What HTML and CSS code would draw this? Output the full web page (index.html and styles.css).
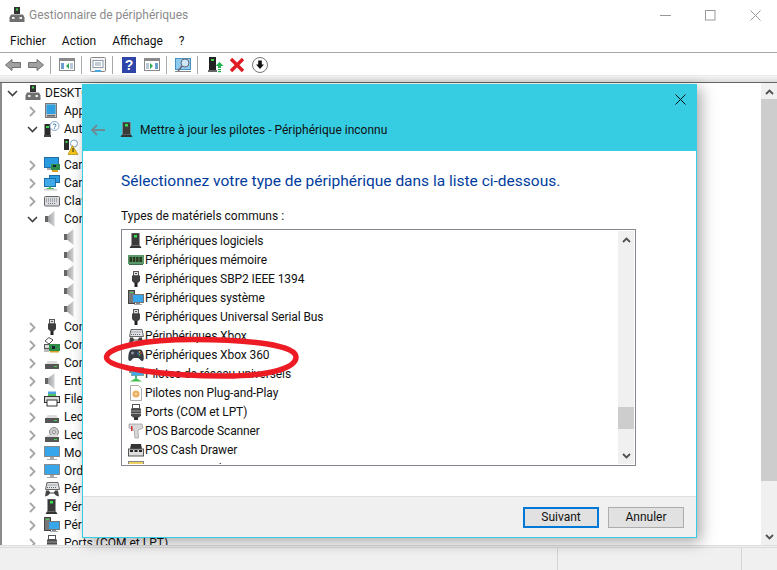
FILE: index.html
```html
<!DOCTYPE html>
<html lang="fr">
<head>
<meta charset="utf-8">
<title>Gestionnaire de périphériques</title>
<link rel="stylesheet" href="styles.css">
</head>
<body>
<svg class="defs" width="0" height="0">
  <defs>
    <linearGradient id="spk" x1="0" x2="1" y1="0" y2="0"><stop offset="0" stop-color="#777"/><stop offset=".45" stop-color="#aaa"/><stop offset="1" stop-color="#d0d3d5"/></linearGradient>
    <symbol id="tower" viewBox="0 0 16 16"><rect x="3.500" y="0" width="8" height="12.500" fill="#3a3a3a" stroke="#999" stroke-width=".6"/><rect x="6" y="2" width="3" height="2.500" fill="#35e04f"/><path d="M3 12.500h9l1.500 2.500H1.500z" fill="#333"/></symbol>
    <symbol id="pc" viewBox="0 0 16 16"><rect x="5" y="0" width="6" height="7" fill="#333"/><rect x="7" y="1.500" width="2" height="2" fill="#3fd64f"/><path d="M2 7.500h12l1.500 3v4.500H.5v-4.500z" fill="#707070"/><rect x="3" y="10" width="2.500" height="2" fill="#eee"/><rect x="10.500" y="10" width="2.500" height="2" fill="#eee"/></symbol>
    <symbol id="tablet" viewBox="0 0 16 16"><rect x="1.500" y="0.500" width="11" height="14" fill="#c4c4c4" stroke="#777"/><rect x="2.500" y="1.500" width="9" height="9.500" fill="#2f9fe0"/><rect x="3" y="12" width="8" height="1.500" fill="#666"/></symbol>
    <symbol id="unknown" viewBox="0 0 16 16"><rect x="0.500" y="3" width="6" height="11" fill="#2b2b2b"/><rect x="2" y="5" width="3" height="2" fill="#3fd64f"/><rect x="0" y="14" width="7" height="2" fill="#444"/><circle cx="10.500" cy="5" r="4.500" fill="#fff" stroke="#7fa6c9"/><path d="M9 3.900c.6-1.300 3-1.100 3 .3 0 1-1.400 1-1.400 2.300M10.600 7.300v.9" fill="none" stroke="#2f6ea8"/></symbol>
    <symbol id="warn" viewBox="0 0 16 16"><rect x="1" y="0" width="5" height="11" fill="#2b2b2b"/><rect x="2.500" y="2" width="2" height="2" fill="#3fd64f"/><circle cx="11" cy="4.500" r="3.500" fill="#fff" stroke="#7fa6c9"/><path d="M9.500 6.500L5 15.500h10z" fill="#f5c518" stroke="#a87b00" stroke-width=".6"/><rect x="9.500" y="9" width="1" height="4" fill="#222"/></symbol>
    <symbol id="netcard" viewBox="0 0 16 16"><rect x="0.500" y="0.500" width="14" height="10" fill="#2b9be0" stroke="#1c6ea8"/><rect x="7" y="7" width="9" height="6" fill="#2f8f4a"/><rect x="9" y="8" width="3" height="2" fill="#123"/><rect x="8" y="13" width="6" height="2" fill="#d8a020"/><rect x="3" y="11" width="4" height="2" fill="#aaa"/></symbol>
    <symbol id="monitors" viewBox="0 0 16 16"><rect x="5.500" y="0.500" width="10" height="7" fill="#2b9be0" stroke="#1c6ea8"/><rect x="0.500" y="3.500" width="11" height="8" fill="#3fa9ea" stroke="#1c6ea8"/><path d="M5 11.500h2v1.500h2.500l1 1.500H2L3 13h2z" fill="#3fc24f"/><rect x="0" y="14" width="13" height="1.500" fill="#ccc"/></symbol>
    <symbol id="keyboard" viewBox="0 0 16 16"><rect x="0.500" y="3.500" width="15" height="9.500" rx="1" fill="#d8dce0" stroke="#666"/><path d="M2 6h12M2 8h12M4 10.500h8" stroke="#777" stroke-dasharray="1 1"/></symbol>
    <symbol id="speaker" viewBox="0 0 16 16"><path d="M1 5H4.500l6-5v16l-6-5H1z" fill="url(#spk)"/><path d="M1 5H4v6H1z" fill="#666"/></symbol>
    <symbol id="usb" viewBox="0 0 16 16"><rect x="5.500" y="0.500" width="5" height="4.500" fill="#ddd" stroke="#555"/><rect x="7" y="2" width="2" height="1" fill="#555"/><path d="M4 4.500h8v5.500l-2 2H6l-2-2z" fill="#3f3f3f"/><rect x="6.500" y="12" width="3" height="4" fill="#222"/></symbol>
    <symbol id="storage" viewBox="0 0 16 16"><path d="M1 4l4-3.500L9 3 5 7z" fill="#fff" stroke="#555"/><rect x="0.500" y="7.500" width="6" height="4" fill="#ddd" stroke="#555"/><rect x="5" y="7" width="11" height="7" fill="#2f8f4a"/><rect x="8" y="9" width="3" height="3" fill="#123"/><rect x="6" y="14" width="9" height="1.500" fill="#d8a020"/><rect x="0" y="12" width="5" height="3" fill="#bbb"/></symbol>
    <symbol id="printer" viewBox="0 0 16 16"><rect x="4" y="0.500" width="8" height="5" fill="#4fa0e0"/><rect x="4" y="3" width="8" height="2" fill="#4fc060"/><rect x="0.500" y="5.500" width="15" height="6" fill="#ddd" stroke="#333"/><rect x="3" y="9" width="10" height="6" fill="#fff" stroke="#333"/></symbol>
    <symbol id="drive" viewBox="0 0 16 16"><path d="M2 9l1.500-3h9L14 9z" fill="#ddd"/><rect x="1" y="9" width="14" height="5" fill="#555"/><rect x="10" y="11" width="3" height="1" fill="#3fd64f"/></symbol>
    <symbol id="disc" viewBox="0 0 16 16"><circle cx="10" cy="5" r="4.500" fill="#ccc" stroke="#888"/><circle cx="10" cy="5" r="1.500" fill="#fff" stroke="#888"/><path d="M2 10l1-2h10l1 2z" fill="#ddd"/><rect x="1" y="10" width="14" height="5" fill="#555"/><rect x="10" y="12" width="3" height="1" fill="#3fd64f"/></symbol>
    <symbol id="monitor" viewBox="0 0 16 16"><rect x="0.500" y="1.500" width="15" height="10" fill="#38a6ea" stroke="#888"/><rect x="6" y="12" width="4" height="2" fill="#aaa"/><rect x="3" y="14" width="10" height="1" fill="#aaa"/></symbol>
    <symbol id="hid" viewBox="0 0 16 16"><path d="M3 1.500h11l1.500 7h-14z" fill="#e0e4e8" stroke="#666"/><path d="M3.500 4h9M3 6.500h10" stroke="#666" stroke-dasharray="1 1"/><path d="M1 15.500l1-6h3l1 2h4l1-2h3l1 6-3-1-2-2H6l-2 2z" fill="#444"/></symbol>
    <symbol id="system" viewBox="0 0 16 16"><rect x="0.500" y="0.500" width="6" height="13" fill="#777" stroke="#444"/><rect x="2" y="2" width="3" height="1" fill="#3fd64f"/><rect x="4.500" y="4.500" width="11" height="8" fill="#38a6ea" stroke="#777"/><rect x="8" y="13" width="4" height="1" fill="#888"/><rect x="6" y="14" width="8" height="1" fill="#aaa"/></symbol>
    <symbol id="port" viewBox="0 0 16 16"><rect x="4.500" y="0.500" width="7" height="4" fill="#fff" stroke="#555"/><path d="M3 4.500h10v7l-2 2H5l-2-2z" fill="#4d4d4d"/><path d="M3 7h10M3 9.500h10" stroke="#999"/><rect x="6" y="13" width="4" height="3" fill="#333"/></symbol>
    <symbol id="memory" viewBox="0 0 16 16"><rect x="0" y="3" width="16" height="9" fill="#5a9a6a"/><path d="M1.500 5h2.500v5H1.500zM4.800 5h2.500v5H4.800zM8.100 5h2.500v5H8.100zM11.400 5h2.500v5h-2.500z" fill="#2a3a20"/><path d="M1 12h14v1H1z" fill="#3a6a48"/></symbol>
    <symbol id="gamepad" viewBox="0 0 16 16"><path d="M4 2.500h8c2 0 3 2 3.500 5.500s.5 6-1.500 6c-1.500 0-2.500-3-4-3H6c-1.500 0-2.500 3-4 3-2 0-1.800-3-1.500-6S2 2.500 4 2.500z" fill="#363c43"/><circle cx="4.500" cy="6" r="1.500" fill="#8d959c"/><circle cx="11.500" cy="4.800" r=".9" fill="#e8c53a"/><circle cx="13" cy="6.300" r=".9" fill="#d94040"/><circle cx="10" cy="6.300" r=".9" fill="#3a78d9"/><circle cx="11.500" cy="7.800" r=".9" fill="#3fc24f"/></symbol>
    <symbol id="netmon" viewBox="0 0 16 16"><rect x="1" y="0" width="5" height="7" fill="#888"/><rect x="3.500" y="1.500" width="12" height="8" fill="#3fa9ea" stroke="#7aa"/><rect x="7" y="9.500" width="2" height="3" fill="#4a8"/><path d="M2 15.500l6-3.500 6 3.500z" fill="#3fc24f"/></symbol>
    <symbol id="pnp" viewBox="0 0 16 16"><path d="M2.500 .5h8l3 3v12h-11z" fill="#fff" stroke="#aaa"/><circle cx="8" cy="9" r="3.500" fill="#e8b060"/><circle cx="8" cy="9" r="1.200" fill="#f8d8a0"/></symbol>
    <symbol id="scanner" viewBox="0 0 16 16"><path d="M1 1h13l1 4-5 2 .5 8H7L6 7 1 5z" fill="#d8d8d8" stroke="#888" stroke-width=".6"/><rect x="3" y="3" width="1.500" height="5" fill="#d43030"/></symbol>
    <symbol id="cash" viewBox="0 0 16 16"><path d="M3 2h10l1 5H2z" fill="#333"/><rect x="0.500" y="7" width="15" height="7" fill="#ddd" stroke="#555"/><path d="M2 8h3v2H2zM6.500 8h3v2h-3zM11 8h3v2h-3z" fill="#222"/></symbol>
    <symbol id="posd" viewBox="0 0 16 16"><rect x="0.500" y="0.500" width="15" height="10" fill="#f0d060" stroke="#888"/></symbol>
    <symbol id="chev-r" viewBox="0 0 9 11"><path d="M2 1l4.500 4.500L2 10" fill="none" stroke="#a6a6a6" stroke-width="1.800"/></symbol>
    <symbol id="chev-d" viewBox="0 0 11 9"><path d="M1 2l4.500 4.500L10 2" fill="none" stroke="#404040" stroke-width="1.600"/></symbol>
    <symbol id="arrow-s" viewBox="0 0 9 6"><path d="M1 5l3.500-3.500L8 5" fill="none" stroke="#505050" stroke-width="1.800"/></symbol>
  </defs>
</svg>

<div class="window">
  <header class="titlebar">
    <svg class="ico"><use href="#pc"/></svg>
    <span class="title">Gestionnaire de périphériques</span>
    <div class="caption">
      <svg class="cap" viewBox="0 0 11 11"><path d="M0 5.500h11" stroke="#999"/></svg>
      <svg class="cap" viewBox="0 0 11 11"><rect x=".5" y=".5" width="9.500" height="9.500" fill="none" stroke="#999"/></svg>
      <svg class="cap" viewBox="0 0 11 11"><path d="M.5.500l10 10M10.500.500l-10 10" stroke="#999"/></svg>
    </div>
  </header>
  <nav class="menubar"><span>Fichier</span><span>Action</span><span>Affichage</span><span>?</span></nav>
  <div class="toolbar">
    <svg class="tb" viewBox="0 0 16 16"><path d="M.500 8L7 2.500V5.500h8.500v5H7v3z" fill="#a0a0a0" stroke="#707070"/></svg>
    <svg class="tb" viewBox="0 0 16 16"><path d="M15.500 8L9 2.500V5.500H.5v5H9v3z" fill="#a0a0a0" stroke="#707070"/></svg>
    <i class="sep"></i>
    <svg class="tb" viewBox="0 0 16 16"><rect x=".5" y="1.500" width="15" height="12" fill="#fff" stroke="#8a8a8a"/><rect x="1" y="2" width="14" height="2" fill="#8a8a8a"/><rect x="2" y="6" width="3" height="6" fill="#6aa0d0"/><path d="M10 6v6L7 9z" fill="#2fa84f"/><rect x="11" y="6" width="3" height="6" fill="#b8c8d8"/></svg>
    <i class="sep"></i>
    <svg class="tb" viewBox="0 0 16 16"><rect x=".5" y=".5" width="15" height="14" rx="1" fill="#f4f4f4" stroke="#888"/><rect x="3" y="3.500" width="10" height="7" fill="#fff" stroke="#8a9aaa"/><path d="M5 6h6M5 8h6" stroke="#8a9aaa"/><rect x="5" y="13" width="6" height="2" fill="#4aa8e0"/></svg>
    <i class="sep"></i>
    <svg class="tb tb-help" viewBox="0 0 14 16"><rect width="14" height="16" fill="#2f45a8"/><text x="7" y="13" class="q">?</text></svg>
    <svg class="tb" viewBox="0 0 16 16"><rect x=".5" y="1.500" width="15" height="12" fill="#fff" stroke="#8a8a8a"/><rect x="1" y="2" width="14" height="2" fill="#8a8a8a"/><rect x="2" y="6" width="3" height="6" fill="#b8c8d8"/><path d="M6 6v6l3-3z" fill="#2fa84f"/><rect x="11" y="6" width="3" height="6" fill="#6aa0d0"/></svg>
    <i class="sep"></i>
    <svg class="tb" viewBox="0 0 16 16"><rect x=".5" y="1.500" width="15" height="11" fill="#8fcdf0" stroke="#4a90c0"/><rect x="0" y="14" width="16" height="1" fill="#888"/><circle cx="10" cy="6" r="4" fill="#cfe8f8" stroke="#667"/><path d="M7 9l-4 5" stroke="#667" stroke-width="1.500"/></svg>
    <i class="sep"></i>
    <svg class="tb tb-update" viewBox="0 0 16 16"><rect x="1" y="0" width="7" height="13" fill="#222"/><rect x="3" y="2" width="3" height="2" fill="#3fd64f"/><rect x="0" y="13" width="9" height="2" fill="#666"/><path d="M11.500 5l4 4H13v2h-3V9H7.500z" fill="#22b14c"/><rect x="10" y="12" width="3" height="1.200" fill="#22b14c"/><rect x="10" y="14" width="3" height="1.200" fill="#22b14c"/></svg>
    <svg class="tb" viewBox="0 0 16 16"><path d="M2 2l12 12M14 2L2 14" stroke="#e01b24" stroke-width="3.400"/></svg>
    <svg class="tb" viewBox="0 0 16 16"><circle cx="8" cy="8" r="7.500" fill="#fff" stroke="#777"/><path d="M6.200 3.500h3.600v4H12L8 12 4 7.500h2.200z" fill="#111"/></svg>
  </div>
  <div class="band"></div>
  <main class="main">
    <div class="tree">
      <div class="row l0"><svg class="chev"><use href="#chev-d"/></svg><svg class="ico"><use href="#pc"/></svg><span>DESKTOP-PC</span></div>
      <div class="row l1"><svg class="chev"><use href="#chev-r"/></svg><svg class="ico"><use href="#tablet"/></svg><span>Appareils mobiles</span></div>
      <div class="row l1"><svg class="chev"><use href="#chev-d"/></svg><svg class="ico"><use href="#unknown"/></svg><span>Autres périphériques</span></div>
      <div class="row l2"><svg class="ico"><use href="#warn"/></svg><span>Périphérique inconnu</span></div>
      <div class="row l1"><svg class="chev"><use href="#chev-r"/></svg><svg class="ico"><use href="#netcard"/></svg><span>Cartes réseau</span></div>
      <div class="row l1"><svg class="chev"><use href="#chev-r"/></svg><svg class="ico"><use href="#monitors"/></svg><span>Cartes graphiques</span></div>
      <div class="row l1"><svg class="chev"><use href="#chev-r"/></svg><svg class="ico"><use href="#keyboard"/></svg><span>Claviers</span></div>
      <div class="row l1"><svg class="chev"><use href="#chev-d"/></svg><svg class="ico"><use href="#speaker"/></svg><span>Contrôleurs audio</span></div>
      <div class="row l2"><svg class="ico"><use href="#speaker"/></svg></div>
      <div class="row l2"><svg class="ico"><use href="#speaker"/></svg></div>
      <div class="row l2"><svg class="ico"><use href="#speaker"/></svg></div>
      <div class="row l2"><svg class="ico"><use href="#speaker"/></svg></div>
      <div class="row l2"><svg class="ico"><use href="#speaker"/></svg></div>
      <div class="row l1"><svg class="chev"><use href="#chev-r"/></svg><svg class="ico"><use href="#usb"/></svg><span>Contrôleurs USB</span></div>
      <div class="row l1"><svg class="chev"><use href="#chev-r"/></svg><svg class="ico"><use href="#storage"/></svg><span>Contrôleurs de stockage</span></div>
      <div class="row l1"><svg class="chev"><use href="#chev-r"/></svg><svg class="ico"><use href="#drive"/></svg><span>Contrôleurs IDE</span></div>
      <div class="row l1"><svg class="chev"><use href="#chev-r"/></svg><svg class="ico"><use href="#speaker"/></svg><span>Entrées et sorties audio</span></div>
      <div class="row l1"><svg class="chev"><use href="#chev-r"/></svg><svg class="ico"><use href="#printer"/></svg><span>Files d'attente</span></div>
      <div class="row l1"><svg class="chev"><use href="#chev-r"/></svg><svg class="ico"><use href="#drive"/></svg><span>Lecteurs de disque</span></div>
      <div class="row l1"><svg class="chev"><use href="#chev-r"/></svg><svg class="ico"><use href="#disc"/></svg><span>Lecteurs de DVD</span></div>
      <div class="row l1"><svg class="chev"><use href="#chev-r"/></svg><svg class="ico"><use href="#monitor"/></svg><span>Moniteurs</span></div>
      <div class="row l1"><svg class="chev"><use href="#chev-r"/></svg><svg class="ico"><use href="#monitor"/></svg><span>Ordinateur</span></div>
      <div class="row l1"><svg class="chev"><use href="#chev-r"/></svg><svg class="ico"><use href="#hid"/></svg><span>Périphériques d'interface</span></div>
      <div class="row l1"><svg class="chev"><use href="#chev-r"/></svg><svg class="ico"><use href="#tower"/></svg><span>Périphériques logiciels</span></div>
      <div class="row l1"><svg class="chev"><use href="#chev-r"/></svg><svg class="ico"><use href="#system"/></svg><span>Périphériques système</span></div>
      <div class="row l1"><svg class="chev"><use href="#chev-r"/></svg><svg class="ico"><use href="#port"/></svg><span>Ports (COM et LPT)</span></div>
    </div>
    <div class="vscroll">
      <svg class="sarrow"><use href="#arrow-s"/></svg>
      <div class="thumb main-thumb"></div>
      <svg class="sarrow down"><use href="#arrow-s"/></svg>
    </div>
  </main>
  <footer class="status"><i></i><i></i><i></i></footer>
</div>

<section class="dialog">
  <header class="dlg-head">
    <div class="dlg-close"><svg viewBox="0 0 11 11"><path d="M.5.500l10 10M10.500.500l-10 10" stroke="#111"/></svg></div>
    <div class="dlg-title">
      <svg class="back" viewBox="0 0 14 12"><path d="M6 1L1 6l5 5M1 6h13" fill="none" stroke="#6f8a92" stroke-width="1.800"/></svg>
      <svg class="ico"><use href="#tower"/></svg>
      <span>Mettre à jour les pilotes - Périphérique inconnu</span>
    </div>
  </header>
  <div class="dlg-body">
    <h1>Sélectionnez votre type de périphérique dans la liste ci-dessous.</h1>
    <p class="label">Types de matériels communs :</p>
    <div class="listbox">
      <ul class="items">
        <li><svg class="ico"><use href="#tower"/></svg>Périphériques logiciels</li>
        <li><svg class="ico"><use href="#memory"/></svg>Périphériques mémoire</li>
        <li><svg class="ico"><use href="#usb"/></svg>Périphériques SBP2 IEEE 1394</li>
        <li><svg class="ico"><use href="#system"/></svg>Périphériques système</li>
        <li><svg class="ico"><use href="#usb"/></svg>Périphériques Universal Serial Bus</li>
        <li><svg class="ico"><use href="#hid"/></svg>Périphériques Xbox</li>
        <li><svg class="ico"><use href="#gamepad"/></svg>Périphériques Xbox 360</li>
        <li><svg class="ico"><use href="#netmon"/></svg>Pilotes de réseau universels</li>
        <li><svg class="ico"><use href="#pnp"/></svg>Pilotes non Plug-and-Play</li>
        <li><svg class="ico"><use href="#port"/></svg>Ports (COM et LPT)</li>
        <li><svg class="ico"><use href="#scanner"/></svg>POS Barcode Scanner</li>
        <li><svg class="ico"><use href="#cash"/></svg>POS Cash Drawer</li>
        <li><svg class="ico"><use href="#posd"/></svg>POS Line Display</li>
      </ul>
      <div class="vscroll list-scroll">
        <svg class="sarrow"><use href="#arrow-s"/></svg>
        <div class="thumb list-thumb"></div>
        <svg class="sarrow down"><use href="#arrow-s"/></svg>
      </div>
    </div>
  </div>
  <footer class="dlg-foot">
    <button class="btn primary">Suivant</button>
    <button class="btn">Annuler</button>
  </footer>
</section>

<svg class="circle" viewBox="0 0 204 50"><path d="M6.500 24C8 14 45 6.500 93 6.500c57 0 103 5.500 103 17.500 0 11-26 19-71 19C70 43 5 36 6.500 24z" fill="none" stroke="#ed1c24" stroke-width="5.500"/></svg>
</body>
</html>
```
FILE: styles.css
```css
* { box-sizing: border-box; }
html, body { margin: 0; height: 100%; }
body {
  width: 777px;
  height: 570px;
  position: relative;
  overflow: hidden;
  background: #fff;
  font-family: Roboto, "Noto Sans", sans-serif;
  font-size: 12px;
  color: #111;
}
.defs { position: absolute; }
.ico { width: 16px; height: 16px; flex: none; }

.window { height: 570px; display: flex; flex-direction: column; }
.titlebar { height: 30px; display: flex; align-items: center; padding-left: 9px; gap: 4px; }
.title { color: #8c8c8c; font-size: 12px; }
.caption { margin-left: auto; display: flex; gap: 34px; padding-right: 16px; align-items: center; }
.cap { width: 11px; height: 11px; }

.menubar { height: 23px; display: flex; align-items: center; gap: 16px; padding-left: 10px; padding-bottom: 1px; border-bottom: 1px solid #a8a8a8; font-size: 12px; }
.toolbar { height: 22px; display: flex; align-items: center; padding: 2px 0 0 5px; gap: 7px; }
.tb { width: 16px; height: 16px; flex: none; }
.tb-help { width: 14px; margin-left: 1px; margin-right: 1px; }
.tb-update { margin-left: 2px; margin-right: -2px; }
.q { font: bold 14px "Liberation Sans", sans-serif; fill: #fff; text-anchor: middle; }
.sep { width: 1px; height: 18px; background: #a8a8a8; margin: 0 1px 0 -1px; }
.band { height: 8px; background: linear-gradient(#f5f5f5, #dcdcdc); border-top: 1px solid #ececec; border-bottom: 1px solid #666; }

.main { flex: 1; min-height: 0; display: flex; border-left: 2px solid #8a8a8a; overflow: hidden; }
.tree { flex: 1; min-width: 0; overflow: hidden; padding-top: 1px; }
.row { height: 18px; display: flex; align-items: center; white-space: nowrap; overflow: hidden; }
.row span { margin-left: 4px; }
.chev { width: 11px; height: 11px; flex: none; margin-right: 6px; }
.l0 { padding-left: 5px; }
.l0 .chev { margin-right: 7px; }
.l1 { padding-left: 25px; }
.l2 { padding-left: 61px; }

.vscroll { width: 16px; flex: none; background: #f0f0f0; display: flex; flex-direction: column; align-items: center; position: relative; }
.sarrow { width: 9px; height: 6px; flex: none; margin: 6px 0 4px; }
.sarrow.down { transform: scaleY(-1); margin: auto 0 5px; }
.thumb { width: 100%; background: #cdcdcd; }
.main-thumb { height: 382px; }
.list-thumb { position: absolute; left: 0; top: 176px; height: 22px; }

.status { height: 25px; flex: none; background: #f0f0f0; border-top: 3px double #dcdcdc; display: flex; }
.status i { width: 184px; border-right: 1px solid #d4d4d4; }
.status i:first-child { width: 558px; }
.status i:last-child { border: 0; width: auto; }

.dialog { position: absolute; left: 82px; top: 84px; width: 615px; height: 454px; background: #fff; border: 1px solid #36cde3; box-shadow: 4px 4px 14px rgba(0,0,0,.35); display: flex; flex-direction: column; }
.dlg-head { height: 66px; flex: none; background: #36cde3; position: relative; }
.dlg-close { position: absolute; right: 10px; top: 9px; width: 11px; height: 11px; }
.dlg-close svg { display: block; width: 11px; height: 11px; }
.dlg-title { display: flex; align-items: center; padding: 37px 0 0 8px; }
.dlg-title .back { width: 14px; height: 12px; flex: none; margin-right: 14px; }
.dlg-title .ico { margin-right: 5px; }
.dlg-title span { font-size: 12px; color: #111; }
.dlg-body { flex: 1; min-height: 0; padding: 20px 60px 0 38px; }
h1 { margin: 0; font-size: 15.5px; font-weight: 400; color: #003c9e; white-space: nowrap; line-height: 20px; }
.label { margin: 17px 0 0; font-size: 12px; line-height: 16px; }
.listbox { margin-top: 5px; width: 515px; height: 237px; border: 1px solid #828790; padding: 1px; display: flex; }
.items { list-style: none; margin: 0; padding: 0 0 0 5px; flex: 1; min-width: 0; height: 233px; overflow: hidden; letter-spacing: -0.1px; }
.items li { height: 19px; display: flex; align-items: center; gap: 1px; white-space: nowrap; }
.list-scroll { height: 233px; }

.dlg-foot { height: 41px; flex: none; background: #f0f0f0; border-top: 1px solid #dfdfdf; display: flex; justify-content: flex-end; align-items: center; gap: 9px; padding-right: 12px; }
.btn { width: 76px; height: 21px; padding: 0; background: #e1e1e1; border: 1px solid #adadad; font: 12px Roboto, sans-serif; color: #111; }
.btn.primary { border: 2px solid #0078d7; }

.circle { position: absolute; left: 100px; top: 333px; width: 204px; height: 50px; }
```
